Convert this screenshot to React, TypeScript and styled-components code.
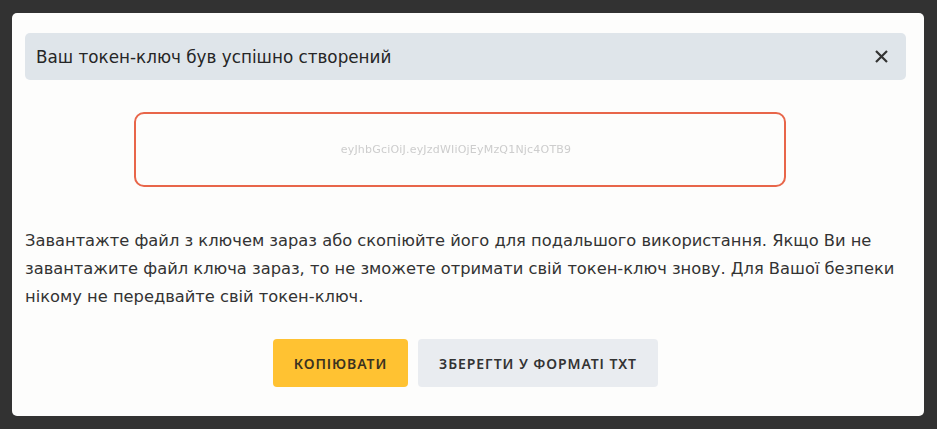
import * as React from 'react';
import styled, { createGlobalStyle } from 'styled-components';

const GlobalStyle = createGlobalStyle`
  html, body {
    margin: 0;
    padding: 0;
    background: #323232;
  }

  body {
    font-family: 'DejaVu Sans', 'Noto Sans', sans-serif;
    color: #2b2b2b;
  }
`;

const Page = styled.div`
  width: 937px;
  height: 429px;
  padding: 13px 13px 0 12px;
  box-sizing: border-box;
`;

const Modal = styled.div`
  width: 912px;
  box-sizing: border-box;
  padding: 20px 18px 29px 13px;
  background: #fdfdfc;
  border-radius: 5px;
`;

const Alert = styled.div`
  height: 47px;
  display: flex;
  align-items: center;
  justify-content: space-between;
  padding: 0 17px 0 11px;
  background: #dfe5ea;
  border-radius: 5px;
  font-size: 16.8px;
  color: #262626;
`;

const CloseButton = styled.button`
  display: flex;
  align-items: center;
  justify-content: center;
  width: 16px;
  height: 16px;
  padding: 0;
  border: none;
  background: none;
  color: #333;
  cursor: pointer;
`;

const TokenBox = styled.div`
  width: 652px;
  height: 75px;
  box-sizing: border-box;
  margin: 32px 0 40px 109px;
  display: flex;
  align-items: center;
  justify-content: center;
  border: 2px solid #e8664a;
  border-radius: 10px;
`;

const TokenText = styled.span`
  font-size: 11px;
  letter-spacing: 0.2px;
  color: #cdcdcd;
  filter: blur(0.6px);
  padding-right: 8px;
`;

const Text = styled.p`
  margin: 0;
  font-size: 16.3px;
  line-height: 28px;
  color: #333;
`;

const Actions = styled.div`
  display: flex;
  justify-content: center;
  gap: 10px;
  margin-top: 28px;
`;

const Button = styled.button<{ $variant: 'primary' | 'secondary'; $width: number }>`
  width: ${p => p.$width}px;
  height: 48px;
  border: none;
  border-radius: 4px;
  font-family: 'Noto Sans', sans-serif;
  font-size: 14px;
  font-weight: 600;
  letter-spacing: 0.9px;
  text-transform: uppercase;
  cursor: pointer;
  background: ${p => (p.$variant === 'primary' ? '#ffc232' : '#e9ecf0')};
  color: ${p => (p.$variant === 'primary' ? '#3b3220' : '#333')};
`;

export default function App() {
  return (
    <>
      <GlobalStyle />
      <Page>
        <Modal>
          <Alert>
            <span>Ваш токен-ключ був успішно створений</span>
            <CloseButton aria-label="close">
              <svg width="13" height="13" viewBox="0 0 13 13">
                <path d="M1 1 L12 12 M12 1 L1 12" stroke="currentColor" strokeWidth="2.2" />
              </svg>
            </CloseButton>
          </Alert>
          <TokenBox>
            <TokenText>eyJhbGciOiJ.eyJzdWIiOjEyMzQ1Njc4OTB9</TokenText>
          </TokenBox>
          <Text>
            Завантажте файл з ключем зараз або скопіюйте його для подальшого використання. Якщо Ви не
            завантажите файл ключа зараз, то не зможете отримати свій токен-ключ знову. Для Вашої безпеки
            нікому не передвайте свій токен-ключ.
          </Text>
          <Actions>
            <Button $variant="primary" $width={135}>Копіювати</Button>
            <Button $variant="secondary" $width={240}>Зберегти у форматі txt</Button>
          </Actions>
        </Modal>
      </Page>
    </>
  );
}
